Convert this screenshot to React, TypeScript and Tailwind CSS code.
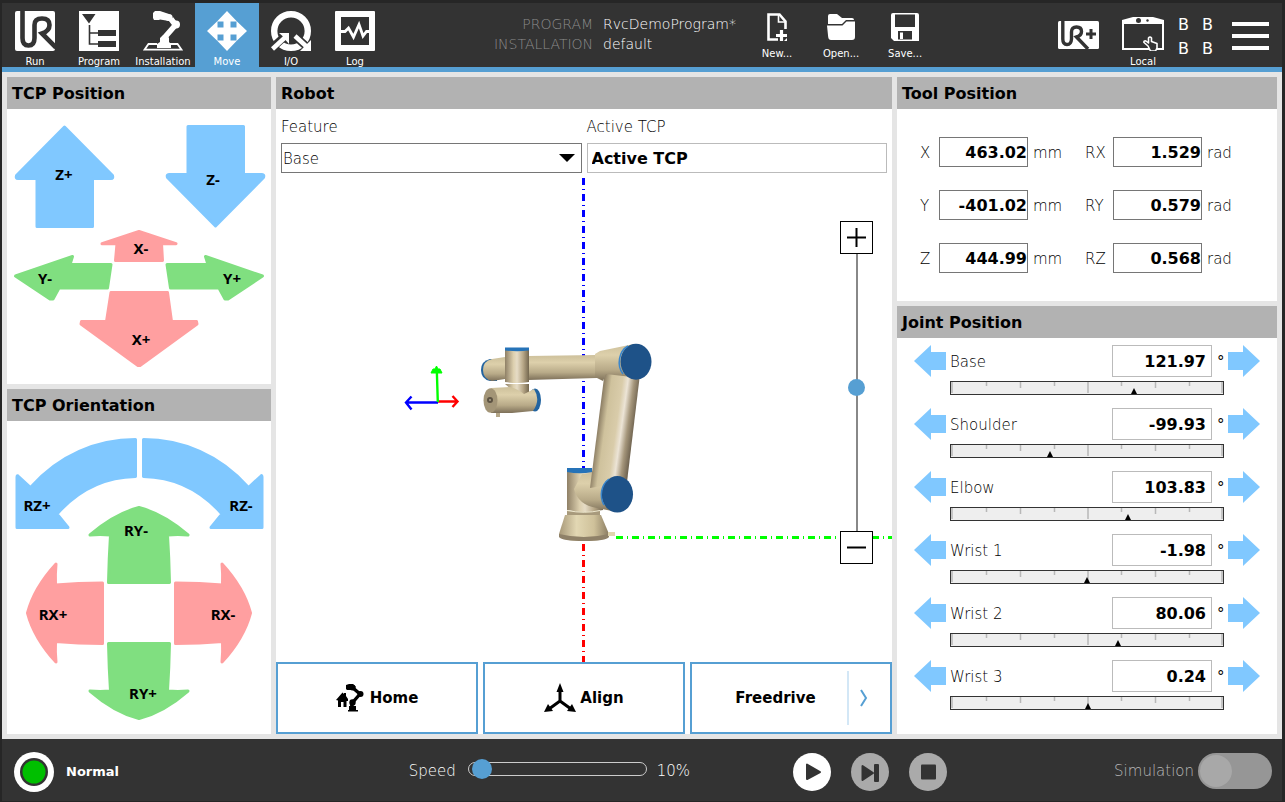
import React, { useState } from 'react';

const BLUE = '#80c8ff';
const RED = '#ff9fa0';
const GREEN = '#80df80';

interface JogProps {
  label: string;
  w: number;
  h: number;
  d: string;
  fill: string;
  tx: number;
  ty: number;
}

// One arrow of the jog pads
const JogArrow: React.FC<JogProps> = ({ label, w, h, d, fill, tx, ty }) => (
  <button type="button" className="block shrink-0">
    <svg width={w} height={h} viewBox={`0 0 ${w} ${h}`} className="block overflow-visible">
      <path d={d} fill={fill} stroke={fill} strokeWidth="3" strokeLinejoin="round" />
      <text x={tx} y={ty} textAnchor="middle" className="font-['Noto_Sans'] text-[15px] font-bold">
        {label}
      </text>
    </svg>
  </button>
);

interface PanelProps {
  title: string;
  className?: string;
  children: React.ReactNode;
}

const Panel: React.FC<PanelProps> = ({ title, className = '', children }) => (
  <section className={`bg-white flex flex-col ${className}`}>
    <h2 className="h-8 shrink-0 bg-[#b2b2b2] px-[5px] text-base leading-[34px] font-bold">{title}</h2>
    {children}
  </section>
);

/* ---------- Header icons ---------- */

const RunIcon = () => (
  <svg width="40" height="40" viewBox="0 0 40 40">
    <rect width="40" height="40" rx="2" fill="#fff" />
    <path
      d="M7.500 0V27Q7.500 34.500 13.500 34.500T19.500 27V14Q19.500 7.500 27 7.500T34.500 14Q34.500 20 27 22.500L41 36.500"
      fill="none"
      stroke="#333"
      strokeWidth="4.600"
    />
  </svg>
);

const ProgramIcon = () => (
  <svg width="40" height="40" viewBox="0 0 40 40">
    <rect width="40" height="40" fill="#fff" />
    <path d="M3 3H16.500L10 12.500ZM19 19H37V25H19ZM19 30H37V36H19Z" fill="#333" />
    <path d="M10.500 14V33H20M10.500 22H20" fill="none" stroke="#333" strokeWidth="1.600" />
  </svg>
);

const InstallationIcon = () => (
  <svg width="40" height="40" viewBox="0 0 40 40">
    <path d="M14 33H5.500L1.500 38.700H38.500L34.500 33H27" fill="none" stroke="#fff" strokeWidth="1.800" />
    <path d="M14 37V33L17 31V27L20 24H24L26 27V31L28 33V37Z" fill="#fff" />
    <path d="M10 2L12 0H17L26 3V10L17 8.500L16 9H11L10 7Z" fill="#fff" />
    <circle cx="26" cy="6.500" r="3.600" fill="#fff" />
    <path d="M28 8L32.500 14L22 26" fill="none" stroke="#fff" strokeWidth="5.600" strokeLinejoin="round" />
    <circle cx="33" cy="13.500" r="4" fill="#fff" />
  </svg>
);

const MoveIcon = () => (
  <svg width="40" height="40" viewBox="0 0 40 40">
    <path
      d="M20 0L30 10.500H23.500V16.500H29.500V10L40 20L29.500 30V23.500H23.500V29.500H30L20 40L10 29.500H16.500V23.500H10.500V30L0 20L10.500 10V16.500H16.500V10.500H10Z"
      fill="#fff"
    />
  </svg>
);

const IoIcon = () => (
  <svg width="40" height="40" viewBox="0 0 40 40">
    <circle cx="20" cy="20" r="16.800" fill="none" stroke="#fff" strokeWidth="6.400" />
    <path d="M0 38L12 27M25 26L36 36" stroke="#333" strokeWidth="8" />
    <path d="M1.500 38L14 26.500" stroke="#fff" strokeWidth="4.500" />
    <path d="M8 22H18V33L14.500 29L11.500 25Z" fill="#fff" />
    <path d="M24 25L36 36" stroke="#fff" strokeWidth="4.500" />
    <path d="M40 29V40H29Z" fill="#fff" />
  </svg>
);

const LogIcon = () => (
  <svg width="40" height="40" viewBox="0 0 40 40">
    <rect width="40" height="40" rx="1" fill="#fff" />
    <rect x="6" y="6" width="28" height="28" fill="#333" />
    <path d="M5 20.500H10L13.500 17L18.500 26L24 13.500L28 25L31.500 20.500H35" fill="none" stroke="#fff" strokeWidth="2.800" />
  </svg>
);

const NewIcon = () => (
  <svg width="28" height="28" viewBox="0 0 28 28">
    <path d="M15 26.500H5.500V1.500H16.500L22.500 8.500V16" fill="none" stroke="#fff" strokeWidth="2.600" />
    <path d="M15.500 2V9H22.500" fill="none" stroke="#fff" strokeWidth="1.600" />
    <path d="M18.500 17V28M13 22.500H24" stroke="#fff" strokeWidth="3.200" />
    <path d="M21 28L24 25V28Z" fill="#fff" />
  </svg>
);

const OpenIcon = () => (
  <svg width="28" height="28" viewBox="0 0 28 28">
    <path d="M1 11V3Q1 1 3 1H10L15 5H25Q27 5 27 7H19L15 11Z" fill="#fff" />
    <path d="M0 12.500H15.500L19.500 8.500H28V24Q28 27 25 27H4Q1.500 27 1.200 24Z" fill="#fff" />
  </svg>
);

const SaveIcon = () => (
  <svg width="28" height="28" viewBox="0 0 28 28">
    <path d="M2 0H26Q28 0 28 2V28H3L0 25V2Q0 0 2 0Z" fill="#fff" />
    <path d="M4 1.500H24V14H4ZM7 18H21V26.500H7Z" fill="#333" />
    <path d="M9 19.500H12V26H9Z" fill="#fff" />
  </svg>
);

const UrPlusIcon = () => (
  <svg width="41" height="28" viewBox="0 0 41 28">
    <rect width="41" height="28" rx="1.500" fill="#fff" />
    <path
      d="M4.800 -1V18Q4.800 23.500 9 23.500T13.500 18V11Q13.500 6 18.500 6T23.500 10.500Q23.500 14.500 18.500 16L30 28"
      fill="none"
      stroke="#333"
      strokeWidth="3.400"
    />
    <path d="M33 8V18M28 13H38" stroke="#333" strokeWidth="3" />
  </svg>
);

const LocalIcon = () => (
  <svg width="44" height="38" viewBox="0 0 44 38">
    <path d="M1 7L12 4H32L43 7V37H1Z" fill="#fff" />
    <path d="M3 11H41V35H3Z" fill="#333" />
    <circle cx="17.500" cy="7.500" r="2.500" fill="#333" />
    <circle cx="26.500" cy="7.500" r="1.200" fill="#333" />
    <path
      d="M27 33L23 29.500Q22.500 27.500 25 28L27.500 30V25Q29 23 30.500 25V28.500L36 30.500V35L34.500 38H29.500Z"
      fill="#333"
      stroke="#fff"
      strokeWidth="1.600"
      strokeLinejoin="round"
    />
  </svg>
);

const TABS = [
  { label: 'Run', Icon: RunIcon },
  { label: 'Program', Icon: ProgramIcon },
  { label: 'Installation', Icon: InstallationIcon },
  { label: 'Move', Icon: MoveIcon },
  { label: 'I/O', Icon: IoIcon },
  { label: 'Log', Icon: LogIcon },
];

const FILE_ACTIONS = [
  { label: 'New...', Icon: NewIcon },
  { label: 'Open...', Icon: OpenIcon },
  { label: 'Save...', Icon: SaveIcon },
];

const Header = () => {
  const [active, setActive] = useState('Move');

  return (
    <header className="flex h-[69px] shrink-0 border-b-[5px] border-[#569fd3] bg-[#333] text-white">
      <nav className="flex pl-px">
        {TABS.map(({ label, Icon }) => (
          <button
            key={label}
            type="button"
            onClick={() => setActive(label)}
            className={`flex w-16 flex-col items-center pt-2 text-[10px] leading-[22px] ${active === label ? 'bg-[#569fd3]' : ''}`}
          >
            <Icon />
            <span className="h-4">{label}</span>
          </button>
        ))}
      </nav>

      <div className="mx-auto flex">
        <dl className="grid grid-cols-[auto_142px] gap-x-[10px] content-start pt-[11px] text-sm leading-5 font-extralight">
          <dt className="text-right text-[#8c8c8c]">PROGRAM</dt>
          <dd>RvcDemoProgram*</dd>
          <dt className="text-right text-[#8c8c8c]">INSTALLATION</dt>
          <dd>default</dd>
        </dl>
        {FILE_ACTIONS.map(({ label, Icon }) => (
          <button key={label} type="button" className="flex w-16 flex-col items-center pt-[10px] text-[10px] leading-5">
            <Icon />
            <span className="pt-[3px]">{label}</span>
          </button>
        ))}
      </div>

      <div className="flex pr-[13px] pl-[14px]">
        <button type="button" aria-label="UR+" className="flex items-center">
          <UrPlusIcon />
        </button>
        <button type="button" className="ml-3 flex w-16 flex-col items-center pt-[10px] text-[10px] leading-[22px]">
          <LocalIcon />
          <span className="h-4">Local</span>
        </button>
        <div className="grid grid-cols-2 content-center gap-x-[13px] pt-[3px] pl-[3px] text-base leading-6">
          <span>B</span>
          <span>B</span>
          <span>B</span>
          <span>B</span>
        </div>
        <button type="button" aria-label="Menu" className="ml-[19px] flex items-center pt-[2px]">
          <svg width="37" height="30" viewBox="0 0 37 30">
            <path d="M0 3H37M0 15H37M0 27H37" stroke="#fff" strokeWidth="4" />
          </svg>
        </button>
      </div>
    </header>
  );
};

/* ---------- Jog pads ---------- */

const TcpPosition = () => (
  <Panel title="TCP Position" className="h-[307px]">
    <div className="ml-[7px] w-[252px] pt-4">
      <div className="flex justify-between">
        <JogArrow label="Z+" w={101} h={103} fill={BLUE} tx={50} ty={55}
          d="M50.500 2L98.500 50.500Q99.500 53.500 97 53.500H78.500V101.500H23V53.500H4Q1.500 53.500 2.500 50.500Z" />
        <JogArrow label="Z-" w={101} h={103} fill={BLUE} tx={48} ty={60}
          d="M50.500 101L98.500 52.500Q99.500 49.500 97 49.500H78.500V1.500H23V49.500H4Q1.500 49.500 2.500 52.500Z" />
      </div>
      <div className="flex w-[250px] flex-col items-center pt-[2px]">
        <JogArrow label="X-" w={78} h={32} fill={RED} tx={41} ty={24}
          d="M39 1.500L76 13.700H61.500L62.500 30.500H15.500L17 13.700H2Z" />
        <div className="-mt-[7px] flex w-full justify-between">
          <JogArrow label="Y-" w={98} h={46} fill={GREEN} tx={31} ty={29}
            d="M1.500 21L58.500 1.500L56 9.500H97L93.500 33H45L39 44H36Z" />
          <JogArrow label="Y+" w={98} h={46} fill={GREEN} tx={66} ty={29}
            d="M96.500 21L39.500 1.500L42 9.500H1L4.500 33H53L59 44H62Z" />
        </div>
        <div className="-mt-[10px]">
          <JogArrow label="X+" w={120} h={77} fill={RED} tx={62} ty={54}
            d="M32 1.500H88.500L92.500 30.500H117.500L118 33L61 74.500H59L2 33L2.500 30.500H27.500Z" />
        </div>
      </div>
    </div>
  </Panel>
);

const TcpOrientation = () => (
  <Panel title="TCP Orientation" className="min-h-[345px] flex-1">
    <div className="flex flex-col items-center pt-[17px]">
      <div className="flex gap-[5px]">
        <JogArrow label="RZ+" w={122} h={91} fill={BLUE} tx={22} ty={73}
          d="M120.500 1.500C82 1.500 44 17 15.500 49.500L3 38Q2 37 2 39V89.500H53L42 76C64 51 92 39 120.500 38.500Z" />
        <JogArrow label="RZ-" w={122} h={91} fill={BLUE} tx={99} ty={73}
          d="M1.500 1.500C40 1.500 78 17 106.500 49.500L119 38Q120 37 120 39V89.500H69L80 76C58 51 30 39 1.500 38.500Z" />
      </div>
      <div className="-mt-[23px]">
        <JogArrow label="RY-" w={102} h={78} fill={GREEN} tx={48} ty={30}
          d="M51 1.500Q76 8 100 29Q90 28 79.500 29Q81 52 81.500 76.500H20.500Q21 52 22.500 29Q12 28 2 29Q26 8 51 1.500Z" />
      </div>
      <div className="-mt-[22px] flex gap-[70px]">
        <JogArrow label="RX+" w={78} h={102} fill={RED} tx={27} ty={58}
          d="M1.500 51Q8 26 30 2Q29 12 29.500 23Q52 21 76.500 21V81.500Q52 81.500 29.500 79.500Q29 90 30 100Q8 76 1.500 51Z" />
        <JogArrow label="RX-" w={78} h={102} fill={RED} tx={49} ty={58}
          d="M76.500 51Q70 26 48 2Q49 12 48.500 23Q26 21 1.500 21V81.500Q26 81.500 48.500 79.500Q49 90 48 100Q70 76 76.500 51Z" />
      </div>
      <div className="-mt-[22px]">
        <JogArrow label="RY+" w={102} h={78} fill={GREEN} tx={55} ty={57}
          d="M51 76.500Q76 70 100 49Q90 50 79.500 49Q81 26 81.500 1.500H20.500Q21 26 22.500 49Q12 50 2 49Q26 70 51 76.500Z" />
      </div>
    </div>
  </Panel>
);

/* ---------- Robot view ---------- */

const RobotScene = () => (
  <svg
    role="img"
    aria-label="Robot arm"
    viewBox="276 173 616 489"
    preserveAspectRatio="xMidYMid slice"
    className="absolute inset-0 h-full w-full"
  >
    <defs>
      <linearGradient id="vert" x1="0" x2="1" y1="0" y2="0">
        <stop offset="0" stopColor="#8f8066" />
        <stop offset="0.35" stopColor="#dccfae" />
        <stop offset="0.5" stopColor="#e6dcc6" />
        <stop offset="0.75" stopColor="#b8a888" />
        <stop offset="1" stopColor="#74674f" />
      </linearGradient>
      <linearGradient id="horiz" x1="0" x2="0" y1="0" y2="1">
        <stop offset="0" stopColor="#cdc09b" />
        <stop offset="0.3" stopColor="#ddd0ab" />
        <stop offset="0.7" stopColor="#b8aa88" />
        <stop offset="1" stopColor="#7d7059" />
      </linearGradient>
      <linearGradient id="arm" gradientUnits="userSpaceOnUse" x1="598" x2="634" y1="425" y2="430">
        <stop offset="0" stopColor="#8d7f65" />
        <stop offset="0.2" stopColor="#cfc29d" />
        <stop offset="0.5" stopColor="#d9ccaa" />
        <stop offset="0.65" stopColor="#ece4d6" />
        <stop offset="0.82" stopColor="#a5967b" />
        <stop offset="1" stopColor="#6d614e" />
      </linearGradient>
      <linearGradient id="foot" x1="0" x2="1" y1="0" y2="0">
        <stop offset="0" stopColor="#a79878" />
        <stop offset="0.35" stopColor="#e2d7b3" />
        <stop offset="0.7" stopColor="#cfc19a" />
        <stop offset="1" stopColor="#8a7c62" />
      </linearGradient>
    </defs>

    {/* axes of the base frame */}
    <path d="M583.500 178V540" stroke="#00f" strokeWidth="3" strokeDasharray="7 4 1 4" />
    <path d="M583.500 544V662" stroke="#f00" strokeWidth="3" strokeDasharray="7 4 1 4" />
    <path d="M616 537.500H892" stroke="#0f0" strokeWidth="3" strokeDasharray="7 4 1 4" />

    {/* base */}
    <path d="M565 515H601L609 534Q609 541 584 541T559 534Z" fill="url(#foot)" />
    <path d="M559 534Q584 540 609 534V537Q606 541 584 541T559 537Z" fill="#8f8168" />
    <path d="M608 532H615V536H608Z" fill="#e0d5ae" />
    <path d="M567 511H600V515H567Z" fill="#a89a7c" />
    <path d="M567 471H603V510Q585 514 567 510Z" fill="url(#vert)" />
    <path d="M567 510.500Q585 514 600 510.500" fill="none" stroke="#efe9cf" />
    <path d="M567 468H592V472Q580 474.500 567 472Z" fill="#2673b8" />

    {/* forearm */}
    <path d="M528 356L597 355V378L528 380Z" fill="url(#horiz)" />
    <path d="M490 359Q481 361 481 370T490 381H497V359Z" fill="#2364a0" />
    <path d="M505 357L492 359Q483 361 483 370T492 381L505 379Z" fill="url(#horiz)" />

    {/* shoulder */}
    <path d="M592 473L618 471L617 512L597 508Q578 505 574 489L582 474Z" fill="url(#horiz)" />

    {/* upper arm and elbow */}
    <path d="M606 362L640 374L627 482L590 488Z" fill="url(#arm)" />
    <path d="M595 354L600 351L634 344L640 378L606 374L603 381L595 377Z" fill="url(#horiz)" />
    <ellipse cx="636" cy="361.700" rx="15.500" ry="18" fill="#1e5288" />
    <path d="M623 374A15.500 18 0 0 1 628 346" fill="none" stroke="#3a86cc" strokeWidth="1.500" />
    <ellipse cx="617.300" cy="494.300" rx="15.700" ry="18.300" fill="#1e5288" />
    <path d="M604 505A15.700 18.300 0 0 1 609 479" fill="none" stroke="#3a86cc" strokeWidth="1.500" />

    {/* wrist */}
    <path d="M505 350H529V382Q517 384 505 382Z" fill="url(#vert)" />
    <path d="M505 347.500H529V350.500Q517 352 505 350.500Z" fill="#2673b8" />
    <path d="M505 384H529V397H520Z" fill="url(#vert)" />
    <ellipse cx="535" cy="400" rx="6" ry="11.500" fill="#2364a0" />
    <path d="M491 388L510 387Q518 389 524 394L534 389Q541 400 533 411L512 413H491Z" fill="url(#horiz)" />
    <ellipse cx="490.500" cy="400.500" rx="7" ry="12.200" fill="#a39577" />
    <circle cx="490" cy="400" r="3" fill="#5c5242" />
    <circle cx="490" cy="400" r="1" fill="#aaa08a" />
    <path d="M496 413H500V417H496Z" fill="#b5a789" />

    {/* orientation gizmo */}
    <g fill="none" strokeWidth="2.400">
      <path d="M438 402.500H406M411.500 396.500L406 402.500L411.500 409.500" stroke="#00f" />
      <path d="M438 401.500H457M452.500 396L457.500 401.500L452.500 407" stroke="#f00" />
      <path d="M437.800 402L436.800 370" stroke="#0f0" />
      <path d="M431 373L433 369H435L436.500 366L438 369H440L442 373Z" fill="#0f0" stroke="#0f0" strokeWidth="1" />
    </g>
  </svg>
);

const HomeIcon = () => (
  <svg width="30" height="28" viewBox="0 0 30 28">
    <path d="M0 16L6.500 8.500L8 10V9H10V12L12 15V17H10.500V23H7.500V18H5V23H2V16.500Z" />
    <path d="M10 1L13 0H17L20 3L16 6H11L10 5Z" />
    <circle cx="16.500" cy="3.500" r="3" />
    <path d="M17 4L24 10L17 18L15 24" fill="none" stroke="#000" strokeWidth="3.400" strokeLinejoin="round" />
    <circle cx="24.500" cy="10" r="3" />
    <circle cx="16.500" cy="18.500" r="3.200" />
    <path d="M13 22H20V26H22V27.500H12V26H13Z" />
  </svg>
);

const AlignIcon = () => (
  <svg width="32" height="30" viewBox="0 0 32 30">
    <path d="M16 8V18L5 26M16 18L27 26" fill="none" stroke="#000" strokeWidth="3" />
    <path d="M16 0L19.500 9H12.500ZM0 29L4 21L9 28ZM32 29L28 21L23 28Z" />
  </svg>
);

const RobotPanel = () => (
  <Panel title="Robot" className="min-w-0">
    <div className="grid grid-cols-2 gap-x-[5px] px-[5px] text-[15px]">
      <label htmlFor="feature" className="h-[34px] leading-9 font-extralight">Feature</label>
      <label htmlFor="tcp" className="h-[34px] leading-9 font-extralight">Active TCP</label>
      <div className="relative">
        <select
          id="feature"
          className="block h-[30px] w-full appearance-none border border-[#767676] bg-white pt-[2px] pl-px font-extralight"
        >
          <option>Base</option>
        </select>
        <svg width="16" height="8" className="pointer-events-none absolute top-[11px] right-[7px]">
          <path d="M0 0H16L8 8Z" />
        </svg>
      </div>
      <input
        id="tcp"
        defaultValue="Active TCP"
        className="h-[30px] w-full min-w-0 border border-[#bbb] px-1 text-base font-bold"
      />
    </div>

    <div className="relative min-h-[489px] flex-1 overflow-hidden">
      <RobotScene />
      <div className="absolute top-12 right-[19px] flex w-[33px] flex-col items-center">
        <button type="button" aria-label="Zoom in" className="flex size-[33px] items-center justify-center border border-black bg-white">
          <svg width="19" height="19"><path d="M9.500 0V19M0 9.500H19" stroke="#000" strokeWidth="2" /></svg>
        </button>
        <input
          type="range"
          aria-label="Zoom"
          defaultValue="52"
          className="h-[277px] w-[17px] appearance-none bg-[linear-gradient(#888,#888)] bg-[length:2px_100%] bg-center bg-no-repeat [direction:rtl] [writing-mode:vertical-lr] [&::-webkit-slider-thumb]:size-[17px] [&::-webkit-slider-thumb]:appearance-none [&::-webkit-slider-thumb]:rounded-full [&::-webkit-slider-thumb]:bg-[#569fd3]"
        />
        <button type="button" aria-label="Zoom out" className="flex size-[33px] items-center justify-center border border-black bg-white">
          <svg width="19" height="19"><path d="M0 9.500H19" stroke="#000" strokeWidth="2" /></svg>
        </button>
      </div>
    </div>

    <div className="grid h-[72px] shrink-0 grid-cols-3 gap-[5px] text-[15px] font-bold">
      <button type="button" className="flex items-center justify-center gap-1 border-2 border-[#569fd3]">
        <HomeIcon />
        Home
      </button>
      <button type="button" className="flex items-center justify-center gap-1 border-2 border-[#569fd3]">
        <AlignIcon />
        Align
      </button>
      <div className="flex border-2 border-[#569fd3]">
        <button type="button" className="flex-1 pl-3">Freedrive</button>
        <button type="button" aria-label="Freedrive options" className="my-[7px] flex w-[43px] items-center border-l-2 border-[#d3e7f6] pl-[10px]">
          <svg width="9" height="18">
            <path d="M2 1L7 9L2 17" fill="none" stroke="#569fd3" strokeWidth="2" />
          </svg>
        </button>
      </div>
    </div>
  </Panel>
);

/* ---------- Right column ---------- */

const TOOL_POSITION = [
  { id: 'X', value: '463.02', unit: 'mm' },
  { id: 'RX', value: '1.529', unit: 'rad' },
  { id: 'Y', value: '-401.02', unit: 'mm' },
  { id: 'RY', value: '0.579', unit: 'rad' },
  { id: 'Z', value: '444.99', unit: 'mm' },
  { id: 'RZ', value: '0.568', unit: 'rad' },
];

const ToolPosition = () => (
  <Panel title="Tool Position" className="h-[224px]">
    <div className="grid grid-cols-[19px_89px_57px_28px_89px_auto] items-center gap-y-[23px] pt-7 pl-[23px] text-[15px] font-extralight">
      {TOOL_POSITION.map(({ id, value, unit }) => (
        <React.Fragment key={id}>
          <label htmlFor={`tool-${id}`} className="pt-[2px]">{id}</label>
          <input
            id={`tool-${id}`}
            defaultValue={value}
            className="h-[30px] min-w-0 border border-[#767676] text-right text-base font-bold"
          />
          <span className="pt-[2px] pl-[5px]">{unit}</span>
        </React.Fragment>
      ))}
    </div>
  </Panel>
);

const JOINTS = [
  { name: 'Base', value: 121.97 },
  { name: 'Shoulder', value: -99.93 },
  { name: 'Elbow', value: 103.83 },
  { name: 'Wrist 1', value: -1.98 },
  { name: 'Wrist 2', value: 80.06 },
  { name: 'Wrist 3', value: 0.24 },
];

const JointBar = ({ value }: { value: number }) => {
  // the scale runs from -360 to 360 degrees
  const x = Math.round(138 + (value / 720) * 274);

  return (
    <svg width="274" height="14" viewBox="0 0 274 14" className="ml-9 block">
      <rect x="0.500" y="0.500" width="273" height="13" fill="#eee" stroke="#333" />
      <path
        d="M36.500 1V5M70.500 1V7M104.500 1V5M171.500 1V5M205.500 1V7M239.500 1V5M2 1V12M138 1V12M272 1V12"
        stroke="#b8b8b8"
        strokeWidth="1.500"
      />
      <path d={`M${x} 7L${x + 3} 13H${x - 3}Z`} />
    </svg>
  );
};

const JointPosition = () => (
  <Panel title="Joint Position" className="min-h-[428px] flex-1">
    <div className="flex flex-col gap-[13px] pt-[7px] pl-[17px]">
      {JOINTS.map(({ name, value }) => (
        <div key={name} className="w-[346px] text-[15px] font-extralight">
          <div className="mb-1 flex items-center">
            <button type="button" aria-label={`${name} minus`}>
              <svg width="32" height="32" className="block">
                <path d="M0 16L17 0V7H32V25H17V32Z" fill={BLUE} />
              </svg>
            </button>
            <label htmlFor={name} className="flex-1 pt-[2px] pl-1">{name}</label>
            <input
              id={name}
              defaultValue={value.toFixed(2)}
              className="h-8 w-[100px] border border-[#bbb] px-[5px] text-right text-base font-bold"
            />
            <span className="w-4 pt-[2px] pl-[5px] font-normal">°</span>
            <button type="button" aria-label={`${name} plus`}>
              <svg width="32" height="32" className="block">
                <path d="M32 16L15 0V7H0V25H15V32Z" fill={BLUE} />
              </svg>
            </button>
          </div>
          <JointBar value={value} />
        </div>
      ))}
    </div>
  </Panel>
);

/* ---------- Footer ---------- */

const Footer = () => {
  const [speed, setSpeed] = useState(10);

  return (
    <footer className="grid h-[62px] shrink-0 grid-cols-[395fr_385fr_321fr_157fr] items-center bg-[#333] pt-1 pr-[10px] pl-3 text-[15px] font-extralight text-white">
      <div className="flex items-center gap-3 text-[13px] font-bold">
        <svg width="40" height="40">
          <circle cx="20" cy="20" r="20" fill="#fff" />
          <circle cx="20" cy="20" r="14" fill="#333" />
          <circle cx="20" cy="20" r="11.500" fill="#00bf00" />
        </svg>
        Normal
      </div>
      <div className="flex items-center pb-[2px]">
        <label htmlFor="speed" className="w-[59px]">Speed</label>
        <input
          id="speed"
          type="range"
          min={8}
          max={100}
          value={speed}
          onChange={e => setSpeed(Number(e.target.value))}
          className="mb-1 h-[14px] w-[179px] appearance-none rounded-full border border-[#ccc] bg-transparent [&::-webkit-slider-thumb]:size-5 [&::-webkit-slider-thumb]:appearance-none [&::-webkit-slider-thumb]:rounded-full [&::-webkit-slider-thumb]:bg-[#569fd3]"
        />
        <output htmlFor="speed" className="pl-[10px]">{speed}%</output>
      </div>
      <div className="flex gap-5">
        <button type="button" aria-label="Play">
          <svg width="38" height="38" className="block">
            <circle cx="19" cy="19" r="19" fill="#fff" />
            <path d="M14 11.500V26L27 19Z" fill="#333" stroke="#333" strokeWidth="2" strokeLinejoin="round" />
          </svg>
        </button>
        <button type="button" aria-label="Step">
          <svg width="38" height="38" className="block">
            <circle cx="19" cy="19" r="19" fill="#aaa" />
            <path d="M11.500 13V27L22 20Z" fill="#333" stroke="#333" strokeWidth="2" strokeLinejoin="round" />
            <rect x="23" y="11" width="5" height="18" rx="1" fill="#333" />
          </svg>
        </button>
        <button type="button" aria-label="Stop">
          <svg width="38" height="38" className="block">
            <circle cx="19" cy="19" r="19" fill="#aaa" />
            <rect x="12" y="11.500" width="15" height="15" rx="1" fill="#333" />
          </svg>
        </button>
      </div>
      <label className="flex items-center justify-end gap-1 pb-[2px] text-[#b8b8b8]">
        Simulation
        <input type="checkbox" role="switch" className="peer sr-only" />
        <span className="flex h-9 w-[74px] items-center rounded-full bg-[#969696] p-[2px] peer-checked:justify-end">
          <span className="size-8 rounded-full bg-[#a8a8a8]" />
        </span>
      </label>
    </footer>
  );
};

export const App: React.FC = () => (
  <div className="flex min-h-screen min-w-[1100px] flex-col bg-[#262626] pt-[3px] pr-[3px] pb-px pl-[2px] font-['DejaVu_Sans',sans-serif] text-black">
    <Header />
    <main className="grid flex-1 grid-cols-[264px_minmax(0,1fr)_380px] gap-[5px] bg-[#e5e5e5] p-[5px]">
      <div className="flex flex-col gap-[5px]">
        <TcpPosition />
        <TcpOrientation />
      </div>
      <RobotPanel />
      <div className="flex flex-col gap-[5px]">
        <ToolPosition />
        <JointPosition />
      </div>
    </main>
    <Footer />
  </div>
);

export default App;
